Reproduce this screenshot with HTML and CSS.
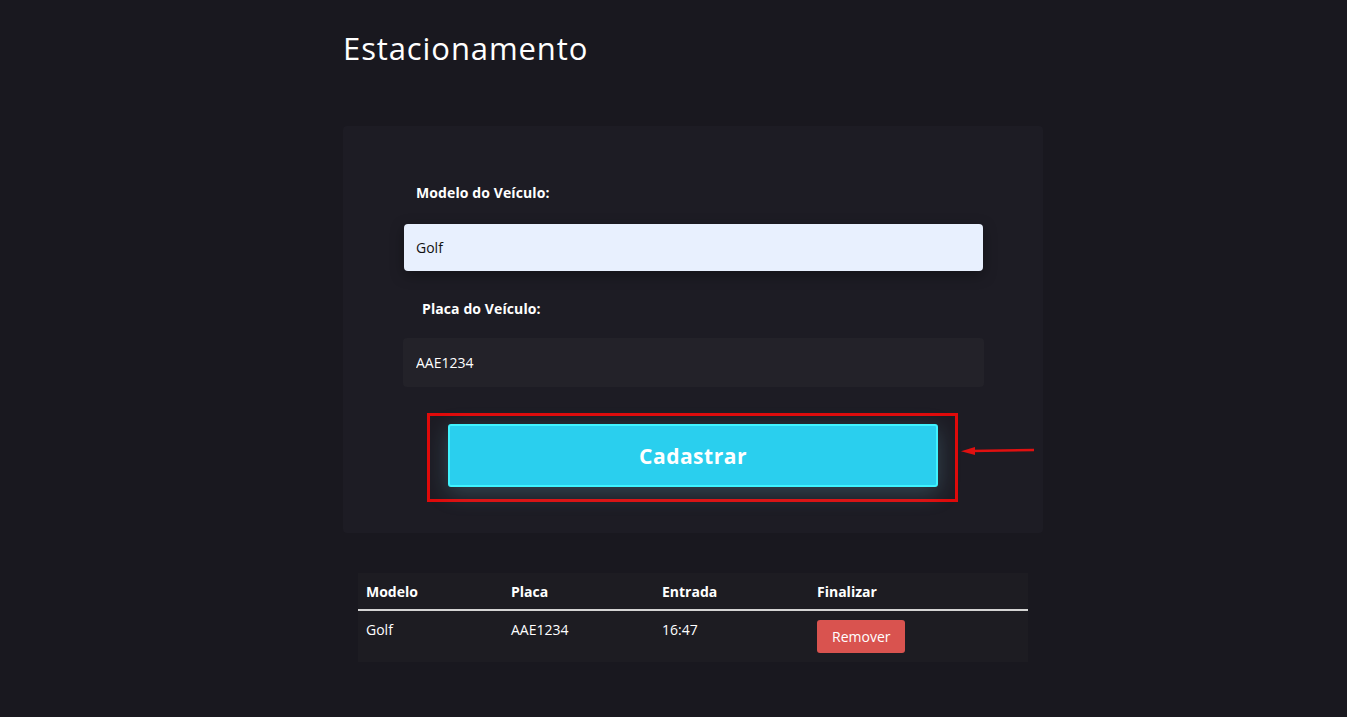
FILE: index.html
```html
<!DOCTYPE html>
<html lang="pt-BR">
<head>
<meta charset="utf-8">
<title>Estacionamento</title>
<link rel="stylesheet" href="styles.css">
</head>
<body>
<main class="page">
  <h1 class="title">Estacionamento</h1>
  <section class="card">
    <form class="form">
      <label class="label label-modelo" for="modelo">Modelo do Veículo:</label>
      <input class="input input-filled" id="modelo" type="text" value="Golf">
      <label class="label label-placa" for="placa">Placa do Veículo:</label>
      <input class="input input-dark" id="placa" type="text" value="AAE1234">
      <div class="btn-wrap">
        <div class="highlight">
          <button class="btn-cadastrar" type="button">Cadastrar</button>
        </div>
        <svg class="arrow" width="74" height="12" viewBox="0 0 74 12">
          <line x1="73" y1="5" x2="10" y2="6" stroke="#e01010" stroke-width="2.4"/>
          <polygon points="0,6.2 14,2 14,10" fill="#e01010"/>
        </svg>
      </div>
    </form>
  </section>
  <table class="table">
    <thead>
      <tr><th class="c1">Modelo</th><th class="c2">Placa</th><th class="c3">Entrada</th><th class="c4">Finalizar</th></tr>
    </thead>
    <tbody>
      <tr><td>Golf</td><td>AAE1234</td><td>16:47</td><td><button class="btn-remover" type="button">Remover</button></td></tr>
    </tbody>
  </table>
</main>
</body>
</html>
```
FILE: styles.css
```css
html, body {
  margin: 0;
  padding: 0;
  background: #19181f;
  color: #fff;
  font-family: "Open Sans", "Liberation Sans", sans-serif;
}
.page {
  width: 700px;
  margin: 0 auto;
  padding-top: 27px;
  padding-left: 39px;
}
.title {
  margin: 0;
  font-size: 31px;
  font-weight: 500;
  line-height: 42px;
  letter-spacing: 0.9px;
}
.card {
  margin-top: 57px;
  background: #1d1c24;
  border-radius: 4px;
  height: 407px;
  box-sizing: border-box;
  padding: 57px 60px 0 61px;
}
.form {
  display: flex;
  flex-direction: column;
  width: 579px;
}
.label {
  font-size: 14px;
  font-weight: 700;
  line-height: 20px;
  padding-left: 12px;
  letter-spacing: 0.1px;
}
.label-placa { padding-left: 18px; margin-top: 28px; }
.input {
  box-sizing: border-box;
  height: 47px;
  border: none;
  border-radius: 4px;
  padding: 0 12px;
  font-family: inherit;
  font-size: 14px;
  outline: none;
}
.input-filled {
  margin-top: 21px;
  background: #e8f0fe;
  color: #111;
  box-shadow: 0 4px 14px rgba(0,0,0,0.35);
}
.input-dark {
  margin-top: 19px;
  height: 49px;
  width: 581px;
  margin-left: -1px;
  background: #232229;
  color: #fff;
  padding-left: 13px;
}
.btn-wrap {
  position: relative;
  margin-top: 26px;
  margin-left: 23px;
  width: 531px;
}
.highlight {
  border: 3px solid #e00a0a;
  box-sizing: border-box;
  width: 531px;
  height: 89px;
  padding: 8px 18px 0 18px;
}
.btn-cadastrar {
  display: block;
  width: 490px;
  height: 63px;
  box-sizing: border-box;
  background: #2acfee;
  border: 2px solid #3ff3ff;
  border-radius: 3px;
  color: #fff;
  font-family: inherit;
  font-size: 21px;
  font-weight: 700;
  letter-spacing: 0.5px;
  box-shadow: 0 6px 22px rgba(120,200,220,0.25);
}
.arrow {
  position: absolute;
  left: 534px;
  top: 32px;
}
.table {
  margin-top: 40px;
  margin-left: 15px;
  width: 670px;
  border-collapse: collapse;
  background: #1d1c22;
  font-size: 14px;
}
.table th {
  text-align: left;
  font-weight: 700;
  height: 36px;
  padding: 0 8px;
  border-bottom: 2px solid #d4d4d4;
  vertical-align: middle;
}
.table td {
  height: 52px;
  padding: 0 8px;
  vertical-align: top;
  padding-top: 9px;
  box-sizing: border-box;
}
.c1 { width: 129px; }
.c2 { width: 135px; }
.c3 { width: 139px; }
.btn-remover {
  margin-top: 0;
  background: #d9534f;
  color: #fff;
  border: none;
  border-radius: 3px;
  height: 33px;
  padding: 0 15px;
  font-family: inherit;
  font-size: 14px;
}
```
